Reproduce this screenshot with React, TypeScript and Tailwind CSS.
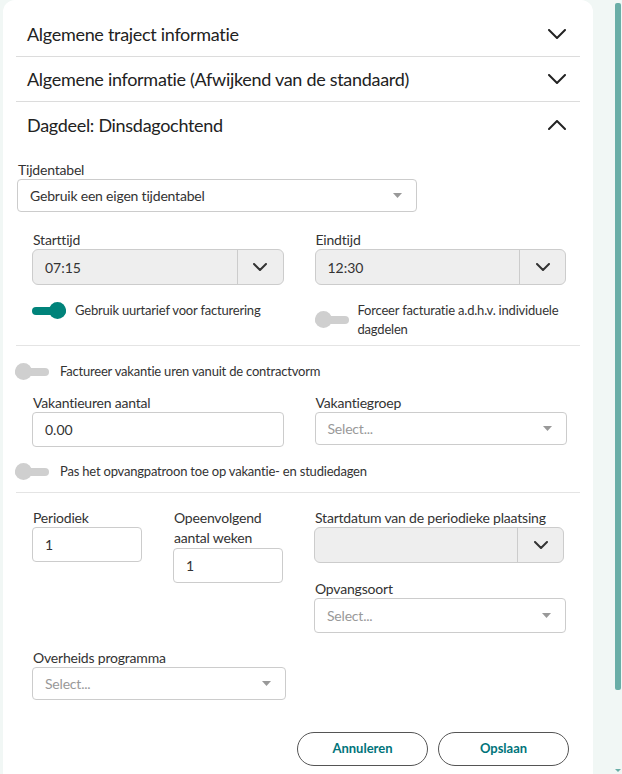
import React from 'react';

const Chevron = ({ up = false, className = '' }: { up?: boolean; className?: string }) => (
  <svg width="18" height="10" viewBox="0 0 18 10" className={className} fill="none">
    <polyline
      points={up ? '1,9 9,1 17,9' : '1,1 9,9 17,1'}
      stroke="#222"
      strokeWidth="2"
      strokeLinecap="round"
      strokeLinejoin="round"
    />
  </svg>
);

const SmallChevron = () => (
  <svg width="14" height="8" viewBox="0 0 14 8" fill="none">
    <polyline points="1,1 7,7 13,1" stroke="#333" strokeWidth="2" strokeLinecap="round" strokeLinejoin="round" />
  </svg>
);

const Caret = () => (
  <svg width="9" height="5" viewBox="0 0 9 5">
    <polygon points="0,0 9,0 4.5,5" fill="#999" />
  </svg>
);

function AccordionHeader({ title, open = false, divider = true }: { title: string; open?: boolean; divider?: boolean }) {
  return (
    <div className={`flex h-[45px] items-center justify-between pl-[11px] pr-[14px] ${divider ? 'border-b border-[#dcdcdc]' : ''}`}>
      <span className="text-[18px] leading-[24px] tracking-[-0.3px] text-[#222]">{title}</span>
      <Chevron up={open} />
    </div>
  );
}

function Toggle({ on, label, className = '' }: { on: boolean; label: React.ReactNode; className?: string }) {
  return (
    <div className={`flex items-start gap-[9px] ${className}`}>
      <div className="relative mt-[1px] h-[17px] w-[34px] shrink-0">
        <div className={`absolute left-0 right-0 top-[5px] h-[8px] rounded-full ${on ? 'bg-[#00837a]' : 'bg-[#cfcfcf]'}`} />
        <div className={`absolute top-0 h-[17px] w-[17px] rounded-full ${on ? 'right-0 bg-[#00837a]' : 'left-0 bg-[#cfcfcf]'}`} />
      </div>
      <span className="whitespace-nowrap text-[13px] leading-[19px] tracking-[-0.2px] text-[#333]">{label}</span>
    </div>
  );
}

function Label({ children, className = '' }: { children: React.ReactNode; className?: string }) {
  return <div className={`text-[14px] leading-[19px] tracking-[-0.2px] text-[#333] ${className}`}>{children}</div>;
}

function SelectBox({ value, placeholder = false, className = '' }: { value: string; placeholder?: boolean; className?: string }) {
  return (
    <div className={`flex h-[33px] items-center justify-between rounded-[4px] border border-[#ccc] bg-white pl-[12px] pr-[14px] ${className}`}>
      <span className={`text-[14px] tracking-[-0.2px] ${placeholder ? 'text-[#999]' : 'text-[#333]'}`}>{value}</span>
      <Caret />
    </div>
  );
}

function TimeInput({ value }: { value: string }) {
  return (
    <div className="flex h-[36px] overflow-hidden rounded-[6px] border border-[#ccc] bg-[#eee]">
      <div className="flex flex-1 items-center pl-[12px] text-[14px] text-[#333]">{value}</div>
      <div className="flex w-[46px] items-center justify-center border-l border-[#ccc]">
        <SmallChevron />
      </div>
    </div>
  );
}

function TextInput({ value, className = '' }: { value: string; className?: string }) {
  return (
    <div className={`flex h-[35px] items-center rounded-[4px] border border-[#ccc] bg-white pl-[12px] text-[14px] text-[#333] ${className}`}>
      {value}
    </div>
  );
}

export default function App() {
  return (
    <div className="flex h-[774px] w-[622px] overflow-hidden bg-[#f1f7f5] font-['Lato',sans-serif]">
      <div className="ml-[3px] w-[590px] shrink-0 rounded-t-[12px] bg-white px-[13px] pt-[12px]">
        <AccordionHeader title="Algemene traject informatie" />
        <AccordionHeader title="Algemene informatie (Afwijkend van de standaard)" />
        <AccordionHeader title="Dagdeel: Dinsdagochtend" open divider={false} />

        <div className="pl-[1px]">
          <Label className="mt-[13px] pl-[1px]">Tijdentabel</Label>
          <SelectBox value="Gebruik een eigen tijdentabel" className="w-[400px]" />
        </div>

        <div className="mt-[18px] grid grid-cols-2 gap-x-[31px] pl-[16px] pr-[14px]">
          <div>
            <Label className="pl-[1px]">Starttijd</Label>
            <TimeInput value="07:15" />
          </div>
          <div>
            <Label className="pl-[1px]">Eindtijd</Label>
            <TimeInput value="12:30" />
          </div>
          <Toggle on label="Gebruik uurtarief voor facturering" className="mt-[16px]" />
          <Toggle
            on={false}
            label={<>Forceer facturatie a.d.h.v. individuele<br />dagdelen</>}
            className="mt-[16px] [&>div]:mt-[10px]"
          />
        </div>

        <div className="mt-[6px] border-t border-[#e4e4e4]" />

        <Toggle on={false} label="Factureer vakantie uren vanuit de contractvorm" className="mt-[16px] -ml-[1px] gap-[11px]" />

        <div className="mt-[12px] grid grid-cols-2 gap-x-[31px] pl-[16px] pr-[14px]">
          <div>
            <Label className="pl-[1px]">Vakantieuren aantal</Label>
            <TextInput value="0.00" />
          </div>
          <div>
            <Label className="pl-[1px]">Vakantiegroep</Label>
            <SelectBox value="Select..." placeholder className="w-[252px]" />
          </div>
        </div>

        <Toggle on={false} label="Pas het opvangpatroon toe op vakantie- en studiedagen" className="mt-[15px] -ml-[1px] gap-[11px]" />

        <div className="mt-[11px] border-t border-[#e4e4e4]" />

        <div className="mt-[15px] flex pl-[16px]">
          <div className="w-[110px]">
            <Label className="pl-[1px]">Periodiek</Label>
            <TextInput value="1" />
          </div>
          <div className="ml-[31px] w-[110px]">
            <Label className="pl-[1px] leading-[20px]">Opeenvolgend<br />aantal weken</Label>
            <TextInput value="1" />
          </div>
          <div className="ml-[31px] w-[252px]">
            <Label className="pl-[1px]">Startdatum van de periodieke plaatsing</Label>
            <div className="w-[250px]">
              <TimeInput value="" />
            </div>
            <Label className="mt-[16px] pl-[1px]">Opvangsoort</Label>
            <SelectBox value="Select..." placeholder className="h-[35px]" />
          </div>
        </div>

        <div className="mt-[15px] pl-[16px]">
          <Label className="pl-[1px]">Overheids programma</Label>
          <SelectBox value="Select..." placeholder className="w-[254px]" />
        </div>

        <div className="mt-[32px] flex justify-end gap-[10px] pr-[11px]">
          <button className="h-[34px] w-[131px] rounded-full border border-[#555] text-[13px] font-bold text-[#00747a]">Annuleren</button>
          <button className="h-[34px] w-[131px] rounded-full border border-[#555] text-[13px] font-bold text-[#00747a]">Opslaan</button>
        </div>
      </div>

      <div className="ml-auto mr-[1px] flex w-[6px] flex-col pt-[3px]">
        <div className="h-[687px] rounded-[2px] bg-[#6aaea7]" />
        <div className="mt-auto mb-[2px] h-0 w-0 border-x-[3px] border-t-[3px] border-x-transparent border-t-[#6aaea7]" />
      </div>
    </div>
  );
}
